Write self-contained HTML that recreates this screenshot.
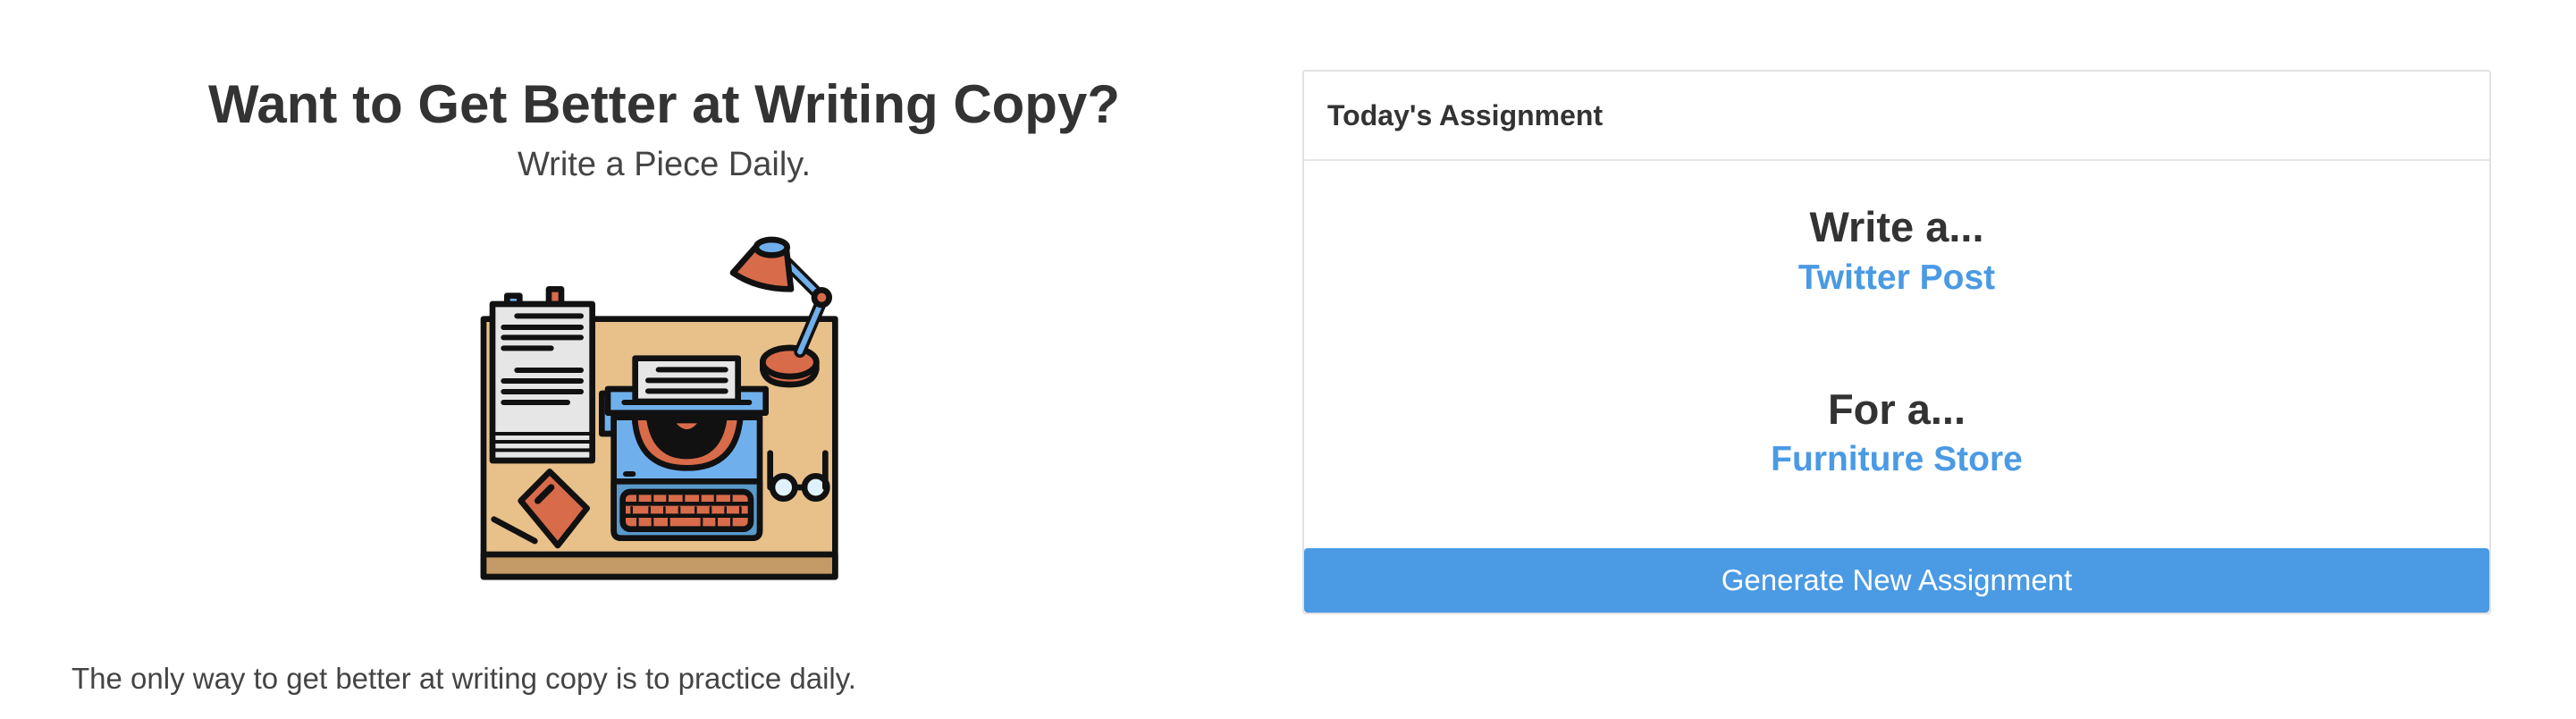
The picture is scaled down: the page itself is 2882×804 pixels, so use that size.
<!DOCTYPE html>
<html><head><meta charset="utf-8"><style>
body{margin:0;width:2882px;height:804px;background:#fff;font-family:"Liberation Sans",Arial,sans-serif;color:#333;position:relative;overflow:hidden}
.a{position:absolute;white-space:nowrap}
.card{position:absolute;left:1457px;top:78px;width:1330px;height:609px;border:2px solid #e2e2e2;border-radius:4px;box-sizing:border-box}
.hdr{position:absolute;left:0;top:0;right:0;height:98px;border-bottom:2px solid #e6e6e6}
.c{position:absolute;left:0;right:0;text-align:center}
.btn{position:absolute;left:0;right:0;bottom:0;height:72px;background:#4a9ae4;border-radius:4px;color:#fff;font-size:33px;text-align:center;line-height:72px}
</style></head><body>
<div class="a" style="left:0;width:1486px;text-align:center;top:82px;font-size:60px;font-weight:bold;color:#333">Want to Get Better at Writing Copy?</div>
<div class="a" style="left:0;width:1486px;text-align:center;top:163px;font-size:38px;color:#444">Write a Piece Daily.</div>
<div class="a" style="left:80px;top:740px;font-size:33px;color:#444">The only way to get better at writing copy is to practice daily.</div>

<svg style="position:absolute;left:480px;top:240px" width="500" height="420" viewBox="0 0 1500 1260">
<g stroke="#111" stroke-width="20" stroke-linejoin="round" stroke-linecap="round">
<rect x="183" y="350" width="1180" height="865" fill="#e8c089"/>
<rect x="183" y="1140" width="1180" height="75" fill="#c49a66"/>
<rect x="262" y="272" width="42" height="30" fill="#6fb0ec"/>
<rect x="402" y="250" width="42" height="50" fill="#d86b4a"/>
<rect x="213" y="300" width="335" height="525" fill="#e6e6e6"/>
<path d="M220 735H540M220 762H540M220 790H540" stroke-width="12"/>
<path d="M295 340H510M250 378H510M250 412H510M250 448H410M295 522H510M250 558H510M250 594H510M250 630H465" stroke-width="18"/>
<path d="M218 1022L355 1095" />
<path d="M308 960L405 862L530 985L432 1110Z" fill="#d86b4a"/>
<path d="M365 960L410 915" stroke-width="22"/>
<rect x="580" y="600" width="40" height="135" fill="#6fb0ec"/>
<path d="M620 680H1110V1060Q1110 1085 1085 1085H645Q620 1085 620 1060Z" fill="#6fb0ec"/>
<path d="M620 895H1110V1060Q1110 1085 1085 1085H645Q620 1085 620 1060Z" fill="#5a9bcc"/>
<path d="M690 680Q700 850 865 850Q1030 850 1045 680Z" fill="#d86b4a"/>
<path d="M740 690Q760 810 865 810Q970 810 990 690Z" fill="#111"/>
<path d="M830 700Q865 740 900 700Z" fill="#d86b4a" stroke="none"/>
<rect x="650" y="930" width="430" height="125" rx="25" fill="#d86b4a"/>
<path d="M650 970H1080M650 1010H1080" stroke-width="14"/>
<path d="M700 940V960M750 940V960M800 940V960M855 940V960M910 940V960M960 940V960M1015 940V960M680 982V1000M740 982V1000M790 982V1000M840 982V1000M895 982V1000M945 982V1000M995 982V1000M1045 982V1000M700 1020V1045M750 1020V1045M805 1020V1045M915 1020V1045M965 1020V1045M1015 1020V1045" stroke-width="8"/>
<path d="M660 870H685" stroke-width="18"/>
<rect x="600" y="585" width="530" height="80" fill="#6fb0ec"/>
<rect x="692" y="482" width="345" height="145" fill="#e6e6e6"/>
<path d="M770 520H995M735 556H995M735 592H995M655 630H1075" stroke-width="18"/>
<path d="M1120 495V520Q1130 570 1210 570Q1290 570 1300 520V495Z" fill="#d86b4a"/>
<ellipse cx="1210" cy="495" rx="90" ry="48" fill="#e8c089"/>
<ellipse cx="1210" cy="495" rx="90" ry="48" fill="#d86b4a"/>
<path d="M1245 460L1320 285" stroke-width="40"/>
<path d="M1245 460L1320 285" stroke="#6fb0ec" stroke-width="18"/>
<path d="M1170 130L1315 275" stroke-width="40"/>
<path d="M1170 130L1315 275" stroke="#6fb0ec" stroke-width="18"/>
<circle cx="1318" cy="278" r="25" fill="#d86b4a"/>
<path d="M1095 110L1020 195Q1100 250 1215 250L1200 120Z" fill="#d86b4a"/>
<ellipse cx="1150" cy="110" rx="52" ry="26" fill="#6fb0ec"/>
<circle cx="1190" cy="915" r="38" fill="#dff1fb"/>
<circle cx="1298" cy="915" r="38" fill="#dff1fb"/>
<path d="M1145 800V915M1330 800V915M1228 915H1260" fill="none"/>
</g></svg>

<div class="card">
<div class="hdr"><div class="a" style="left:26px;top:31px;font-size:32px;font-weight:bold;color:#333">Today's Assignment</div></div>
<div class="c" style="top:146px;font-size:47px;font-weight:bold;color:#333">Write a...</div>
<div class="c" style="top:209px;font-size:39px;font-weight:bold;color:#4a9ae4">Twitter Post</div>
<div class="c" style="top:350px;font-size:47px;font-weight:bold;color:#333">For a...</div>
<div class="c" style="top:412px;font-size:39px;font-weight:bold;color:#4a9ae4">Furniture Store</div>
<div class="btn">Generate New Assignment</div>
</div>
</body></html>
